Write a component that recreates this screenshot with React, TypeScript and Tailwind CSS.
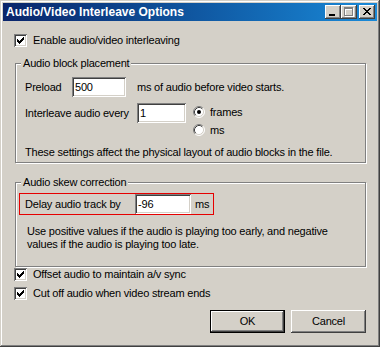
import type { ReactNode } from "react";

// Win2k bevels
const sunken =
  "bg-white shadow-[inset_1px_1px_#808080,inset_-1px_-1px_#ffffff,inset_2px_2px_#404040,inset_-2px_-2px_#d4d0c8]";
const raised =
  "bg-[#d4d0c8] shadow-[inset_-1px_-1px_#404040,inset_1px_1px_#ffffff,inset_-2px_-2px_#808080,inset_2px_2px_#d4d0c8]";

function CheckBox({ checked }: { checked?: boolean }) {
  return (
    <span className={"flex h-[13px] w-[13px] shrink-0 items-center justify-center " + sunken}>
      {checked && (
        <svg width="7" height="7" viewBox="0 0 7 7" shapeRendering="crispEdges">
          <path
            d="M0 2h1v3h-1zM1 3h1v3h-1zM2 4h1v3h-1zM3 3h1v3h-1zM4 2h1v3h-1zM5 1h1v3h-1zM6 0h1v3h-1z"
            fill="#000"
          />
        </svg>
      )}
    </span>
  );
}

function Radio({ checked }: { checked?: boolean }) {
  return (
    <svg width="12" height="12" viewBox="0 0 12 12" className="shrink-0">
      <circle cx="6" cy="6" r="5" fill="#fff" />
      <path d="M2.11 9.89A5.5 5.5 0 0 1 9.89 2.11" stroke="#808080" fill="none" />
      <path d="M9.89 2.11A5.5 5.5 0 0 1 2.11 9.89" stroke="#ffffff" fill="none" />
      <path d="M2.82 9.18A4.5 4.5 0 0 1 9.18 2.82" stroke="#404040" fill="none" />
      <path d="M9.18 2.82A4.5 4.5 0 0 1 2.82 9.18" stroke="#d4d0c8" fill="none" />
      {checked && <circle cx="6" cy="6" r="2" fill="#000" />}
    </svg>
  );
}

function TextBox({ value, className }: { value: string; className: string }) {
  return (
    <span className={"flex h-[20px] shrink-0 items-center pl-[3px] " + sunken + " " + className}>
      {value}
    </span>
  );
}

function GroupBox({ title, className, children }: { title: string; className: string; children: ReactNode }) {
  return (
    <div
      className={
        "relative flex flex-col border border-[#808080] shadow-[inset_1px_1px_#ffffff,1px_1px_#ffffff] " + className
      }
    >
      <span className="absolute -top-[7px] left-[5px] bg-[#d4d0c8] px-[2px] leading-[13px]">{title}</span>
      {children}
    </div>
  );
}

function TitleBar() {
  return (
    <div className="flex h-[18px] shrink-0 items-center bg-gradient-to-r from-[#0a246a] to-[#1a8ad8] pl-[3px] pr-[2px]">
      <span className="flex-1 text-[12px] font-bold leading-[18px] tracking-normal text-white">
        Audio/Video Interleave Options
      </span>
      <span className={"flex h-[14px] w-[16px] " + raised}>
        <svg width="16" height="14" viewBox="0 0 16 14" shapeRendering="crispEdges">
          <rect x="4" y="9" width="6" height="2" fill="#000" />
        </svg>
      </span>
      <span className={"flex h-[14px] w-[16px] " + raised}>
        <svg width="16" height="14" viewBox="0 0 16 14" shapeRendering="crispEdges">
          <path d="M4 3h9v2h-9zM4 3h1v9h-1zM12 3h1v9h-1zM4 11h9v1h-9z" fill="#fff" />
          <path d="M3 2h9v2h-9zM3 2h1v9h-1zM11 2h1v9h-1zM3 10h9v1h-9z" fill="#808080" />
        </svg>
      </span>
      <span className={"ml-[2px] flex h-[14px] w-[16px] " + raised}>
        <svg width="16" height="14" viewBox="0 0 16 14" shapeRendering="crispEdges">
          <path
            d="M4 3h2v1h-2zM10 3h2v1h-2zM5 4h2v1h-2zM9 4h2v1h-2zM6 5h4v1h-4zM7 6h2v1h-2zM6 7h4v1h-4zM5 8h2v1h-2zM9 8h2v1h-2zM4 9h2v1h-2zM10 9h2v1h-2z"
            fill="#000"
          />
        </svg>
      </span>
    </div>
  );
}

function CheckRow({ label, className }: { label: string; className: string }) {
  return (
    <label className={"ml-[11px] flex h-[13px] items-center gap-[6px] " + className}>
      <CheckBox checked />
      <span>{label}</span>
    </label>
  );
}

export default function App() {
  return (
    <div className="flex h-[347px] w-[380px] flex-col bg-[#d4d0c8] p-[3px] font-['Liberation_Sans',Arial,sans-serif] text-[11px] leading-[13px] tracking-[-0.2px] text-black shadow-[inset_-1px_-1px_#404040,inset_1px_1px_#d4d0c8,inset_-2px_-2px_#808080,inset_2px_2px_#ffffff]">
      <TitleBar />

      <div className="flex flex-col">
        <CheckRow label="Enable audio/video interleaving" className="mt-[13px]" />

        <GroupBox title="Audio block placement" className="ml-[12px] mt-[16px] h-[100px] w-[351px]">
          <div className="ml-[9px] mt-[13px] flex h-[20px] items-center">
            <span className="w-[47px]">Preload</span>
            <TextBox value="500" className="w-[54px]" />
            <span className="ml-[11px]">ms of audio before video starts.</span>
          </div>
          <div className="ml-[9px] mt-[6px] flex items-start">
            <span className="flex h-[20px] w-[112px] items-center">Interleave audio every</span>
            <TextBox value="1" className="w-[49px]" />
            <div className="ml-[7px] flex flex-col">
              <div className="flex h-[18px] items-center gap-[5px]">
                <Radio checked />
                <span>frames</span>
              </div>
              <div className="flex h-[18px] items-center gap-[5px]">
                <Radio />
                <span>ms</span>
              </div>
            </div>
          </div>
          <p className="ml-[9px] mt-[7px] h-[13px]">
            These settings affect the physical layout of audio blocks in the file.
          </p>
        </GroupBox>

        <GroupBox title="Audio skew correction" className="ml-[12px] mt-[19px] h-[85px] w-[351px]">
          <div className="ml-[3px] mt-[10px] flex h-[22px] w-[195px] items-center border border-[#e60000]">
            <span className="ml-[5px] w-[110px]">Delay audio track by</span>
            <TextBox value="-96" className="w-[56px]" />
            <span className="ml-[4px]">ms</span>
          </div>
          <p className="ml-[11px] mt-[10px]">
            Use positive values if the audio is playing too early, and negative
            <br />
            values if the audio is playing too late.
          </p>
        </GroupBox>

        <CheckRow label="Offset audio to maintain a/v sync" className="mt-[1px]" />
        <CheckRow label="Cut off audio when video stream ends" className="mt-[6px]" />

        <div className="mt-[10px] flex justify-end gap-[6px] pr-[11px]">
          <button className="h-[23px] w-[75px] bg-[#d4d0c8] shadow-[inset_0_0_0_1px_#000000,inset_-2px_-2px_#404040,inset_2px_2px_#ffffff,inset_-3px_-3px_#808080]">
            OK
          </button>
          <button className={"h-[23px] w-[75px] " + raised}>Cancel</button>
        </div>
      </div>
    </div>
  );
}
